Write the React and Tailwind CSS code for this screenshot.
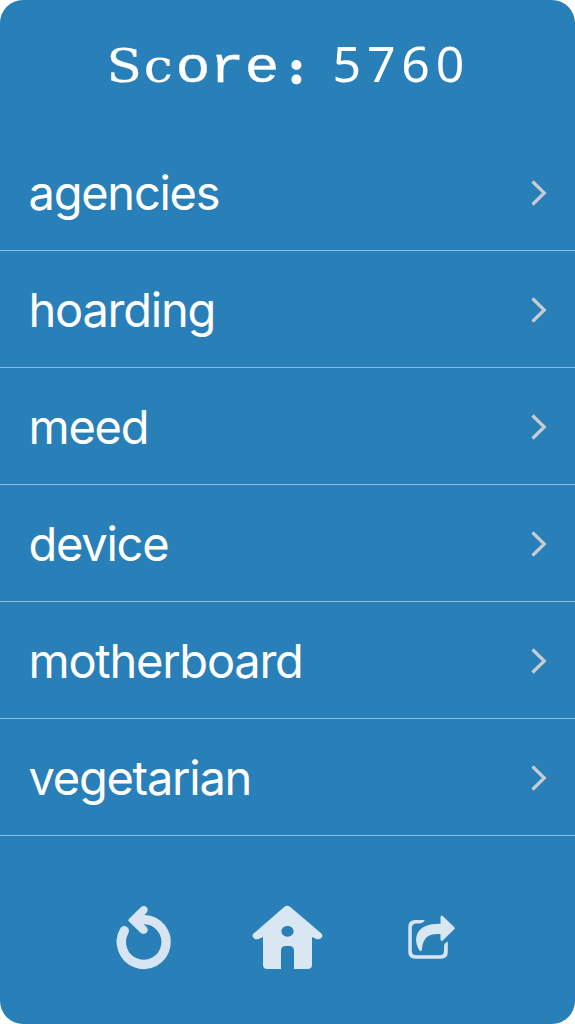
const score = 5760;

const words = ['agencies', 'hoarding', 'meed', 'device', 'motherboard', 'vegetarian'];

// Slab serif letters on a fixed pitch
const SERIF = "font-['DejaVu_Serif',serif] text-[47px] scale-x-[1.1] [-webkit-text-stroke:0.2px_white]";
const MONO = "font-['Liberation_Mono',monospace] text-[50px] scale-x-[1.15] [-webkit-text-stroke:0.4px_white]";
const DOTS = "font-['DejaVu_Serif',serif] text-[46px] [-webkit-text-stroke:3.6px_white]";

const label = [
  ['S', SERIF],
  ['c', SERIF],
  ['o', MONO],
  ['r', MONO],
  ['e', MONO],
  [':', DOTS],
];

function ScoreHeader() {
  return (
    <header className="flex h-[134px] items-baseline pl-[106.5px] pt-[27px] text-white">
      <h1 className="flex items-baseline whitespace-nowrap leading-[72px]">
        <span className="flex items-baseline">
          {label.map(([letter, face]) => (
            <span key={letter} className="flex w-[34.5px] justify-center">
              <span className={face}>{letter}</span>
            </span>
          ))}
        </span>
        <span className="ml-[19px] font-['Noto_Sans',sans-serif] text-[50px] tracking-[5.8px]">
          {score}
        </span>
      </h1>
    </header>
  );
}

function WordRow({ word }) {
  return (
    <li className="flex h-[117px] items-center justify-between border-b border-[#8fbddd] pl-[28.5px] pr-[27px] pt-[2px]">
      <span className="text-[47px] leading-[60px] tracking-[-1.25px] text-white">{word}</span>
      <svg className="h-[26px] w-[17px]" viewBox="0 0 17 26" fill="none" stroke="#c9cbd3" strokeWidth="3.2">
        <path d="M1.5 1.5l11.8 11.5L1.5 24.5" />
      </svg>
    </li>
  );
}

function RestartIcon() {
  return (
    <svg className="h-[85px] w-[80px]" viewBox="0 0 80 85" fill="none" stroke="#d6e5f1" strokeLinecap="round">
      <path d="M19.3 35.8A22.4 22.4 0 1 0 39.5 24.6" strokeWidth="9.4" />
      <path
        d="M23.9 24.1L35.3 12.7C38.5 9.4 43 11.6 42.7 15.3C42.6 17.5 40.5 18.8 39 20.6V29.5C40.5 31.2 42.6 32.2 42.7 34.5C43 38.2 38.5 40.6 35.3 37.5L23.9 26.5Q22.6 25.3 23.9 24.1Z"
        fill="#d6e5f1"
        stroke="none"
      />
    </svg>
  );
}

function HomeIcon() {
  return (
    <svg className="h-[85px] w-[85px]" viewBox="0 0 85 85" fill="#d9e7f2">
      <path
        fillRule="evenodd"
        d="M39.5 11.8Q42.3 9.8 45 11.8L76.4 38.5Q78.2 40.3 76.8 42.5Q75.2 44.8 72 44.2L67 42V69.5Q67 74 62.5 74H49V56Q49 51 44.5 51H40.5Q36 51 36 56V74H22.5Q18 74 18 69.5V42L13 44.2Q9.8 44.8 8.2 42.5Q6.8 40.3 8.6 38.5ZM42.5 31C39 31 36.4 33.2 36.4 36.3S39 41.7 42.5 41.7S48.6 39.4 48.6 36.3S46 31 42.5 31Z"
      />
    </svg>
  );
}

function ShareIcon() {
  return (
    <svg className="h-[85px] w-[75px]" viewBox="0 0 75 85" fill="none">
      <path
        d="M29.8 25C28.5 27.6 26.5 28.4 24 28.4H21.5Q16.8 28.4 16.8 33V56Q16.8 60.2 21.5 60.2H44.5Q49 60.2 49 56V50.5Q49.5 48 52.8 46.5V57Q52.8 63.7 46 63.7H20.5Q13.3 63.7 13.3 57V32Q13.3 25 20.5 25Z"
        fill="#d6e5f1"
      />
      <path d="M45.5 22.2Q45.8 19.5 48 21.2L59.3 32.3Q60.3 33.3 59.3 34.3L48 45.3Q45.8 47 45.5 44.5V39.2C35 38.3 27.8 41.5 26.9 54.6Q26 57.5 24.2 55C16.5 41 23.5 28 45.5 28.7Z" fill="#d9e7f2" />
    </svg>
  );
}

export default function App() {
  return (
    <div className="flex h-[1024px] w-[575px] flex-col overflow-hidden rounded-[23px] bg-[#2980b9] font-['Inter',sans-serif]">
      <ScoreHeader />

      <ul className="flex flex-col">
        {words.map(word => (
          <WordRow key={word} word={word} />
        ))}
      </ul>

      {/* Bottom actions */}
      <nav className="flex items-center pl-[105px] pt-[59px]">
        <button aria-label="Restart"><RestartIcon /></button>
        <button className="ml-[60px]" aria-label="Home"><HomeIcon /></button>
        <button className="ml-[65px]" aria-label="Share"><ShareIcon /></button>
      </nav>
    </div>
  );
}
